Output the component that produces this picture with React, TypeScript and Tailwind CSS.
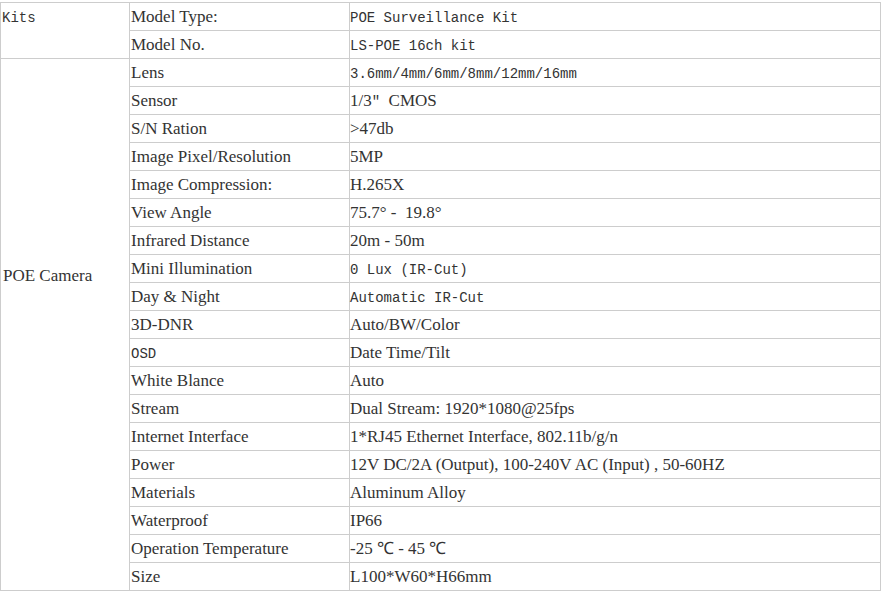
import React from "react";

const serif = "font-['Liberation_Serif','Times_New_Roman',serif] text-[17px]";
const mono = "font-['Liberation_Mono','Courier_New',monospace] text-[14px]";

type Part = { t: string; m?: boolean };
type Row = { label: Part[]; value: Part[] };

const rows: Row[] = [
  { label: [{ t: "Model Type:" }], value: [{ t: "POE Surveillance Kit", m: true }] },
  { label: [{ t: "Model No." }], value: [{ t: "LS-POE 16ch kit", m: true }] },
  { label: [{ t: "Lens" }], value: [{ t: "3.6mm/4mm/6mm/8mm/12mm/16mm", m: true }] },
  { label: [{ t: "Sensor" }], value: [{ t: "1/3" }, { t: "\" ", m: true }, { t: "CMOS" }] },
  { label: [{ t: "S/N Ration" }], value: [{ t: ">47db" }] },
  { label: [{ t: "Image Pixel/Resolution" }], value: [{ t: "5MP" }] },
  { label: [{ t: "Image Compression:" }], value: [{ t: "H.265X" }] },
  { label: [{ t: "View Angle" }], value: [{ t: "75.7° -  19.8°" }] },
  { label: [{ t: "Infrared Distance" }], value: [{ t: "20m - 50m" }] },
  { label: [{ t: "Mini Illumination" }], value: [{ t: "0 Lux (IR-Cut)", m: true }] },
  { label: [{ t: "Day & Night" }], value: [{ t: "Automatic IR-Cut", m: true }] },
  { label: [{ t: "3D-DNR" }], value: [{ t: "Auto/BW/Color" }] },
  { label: [{ t: "OSD", m: true }], value: [{ t: "Date Time/Tilt" }] },
  { label: [{ t: "White Blance" }], value: [{ t: "Auto" }] },
  { label: [{ t: "Stream" }], value: [{ t: "Dual Stream: 1920*1080@25fps" }] },
  { label: [{ t: "Internet Interface" }], value: [{ t: "1*RJ45 Ethernet Interface, 802.11b/g/n" }] },
  { label: [{ t: "Power" }], value: [{ t: "12V DC/2A (Output), 100-240V AC (Input) , 50-60HZ" }] },
  { label: [{ t: "Materials" }], value: [{ t: "Aluminum Alloy" }] },
  { label: [{ t: "Waterproof" }], value: [{ t: "IP66" }] },
  { label: [{ t: "Operation Temperature" }], value: [{ t: "-25 ℃ - 45 ℃" }] },
  { label: [{ t: "Size" }], value: [{ t: "L100*W60*H66mm" }] },
];

function Text({ parts }: { parts: Part[] }) {
  return (
    <span className="whitespace-pre">
      {parts.map((p, i) => (
        <span key={i} className={p.m ? mono : serif}>
          {p.t}
        </span>
      ))}
    </span>
  );
}

export default function App() {
  const cell = "border-r border-b border-[#cdcdcd] flex items-center leading-none";
  return (
    <div className="w-[882px] h-[592px] bg-white text-[#333] pt-[2px]">
      <div className="grid grid-cols-[129px_220px_531px] grid-rows-[repeat(21,28px)] w-[881px] border-t border-l border-[#cdcdcd]">
        <div className={`row-span-2 border-r border-b border-[#cdcdcd] pl-[1px] pt-[8px] leading-none ${mono}`}>Kits</div>
        {rows.slice(0, 2).map((r, i) => (
          <React.Fragment key={i}>
            <div className={`${cell} pl-[1px]`}>
              <Text parts={r.label} />
            </div>
            <div className={`${cell} pl-0`}>
              <Text parts={r.value} />
            </div>
          </React.Fragment>
        ))}
        <div className={`row-span-19 border-r border-b border-[#cdcdcd] pl-[2px] pt-[204px] ${serif}`}>POE Camera</div>
        {rows.slice(2).map((r, i) => (
          <React.Fragment key={i}>
            <div className={`${cell} pl-[1px]`}>
              <Text parts={r.label} />
            </div>
            <div className={`${cell} pl-0`}>
              <Text parts={r.value} />
            </div>
          </React.Fragment>
        ))}
      </div>
    </div>
  );
}
